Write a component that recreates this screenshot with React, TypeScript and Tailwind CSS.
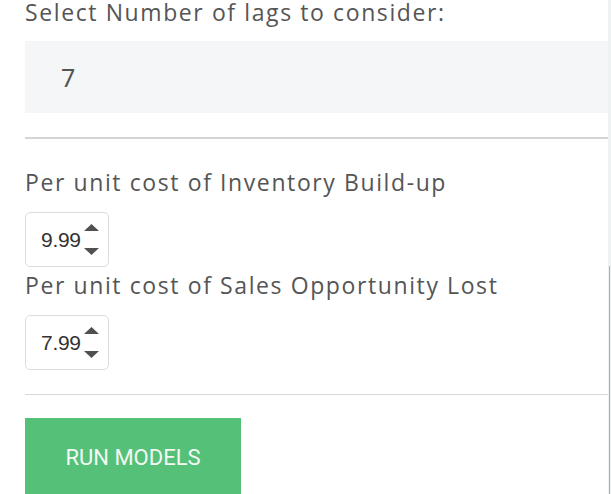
import React from "react";

function Arrows() {
  return (
    <div className="flex flex-col justify-between h-[31px] ml-[3px]">
      <svg width="15" height="7" viewBox="0 0 15 7">
        <polygon points="0,7 7.5,0 15,7" fill="#505050" />
      </svg>
      <svg width="15" height="7" viewBox="0 0 15 7">
        <polygon points="0,0 15,0 7.5,7" fill="#505050" />
      </svg>
    </div>
  );
}

function NumberBox({ value }: { value: string }) {
  return (
    <div className="w-[84px] h-[55px] border border-[#d9dddd] rounded-[5px] bg-white flex items-center pl-[15px]">
      <span className="text-[21px] leading-none text-[#333] tracking-[-0.3px] font-['Liberation_Sans',Arial,sans-serif]">
        {value}
      </span>
      <Arrows />
    </div>
  );
}

export default function App() {
  const label =
    "text-[23px] leading-[24px] h-[24px] text-[#555] tracking-[1.6px] font-['Open_Sans','Lato',sans-serif] whitespace-nowrap";
  return (
    <div className="w-[611px] h-[494px] overflow-hidden bg-white flex">
      <div className="w-[608px] pl-[25px] flex flex-col">
        <div className={label}>Select Number of lags to consider:</div>
        <div className="mt-[17px] h-[72px] bg-[#f5f6f7] flex items-center pl-[36px]">
          <span className="text-[25px] leading-none text-[#555] font-['Noto_Sans',sans-serif]">7</span>
        </div>
        <div className="mt-[24px] h-[2px] bg-[#d4d4d4]" />
        <div className={"mt-[31px] " + label}>Per unit cost of Inventory Build-up</div>
        <div className="mt-[18px]">
          <NumberBox value="9.99" />
        </div>
        <div className={"mt-[6px] " + label}>Per unit cost of Sales Opportunity Lost</div>
        <div className="mt-[18px]">
          <NumberBox value="7.99" />
        </div>
        <div className="mt-[24px] h-[1px] bg-[#d9d9d9]" />
        <div className="mt-[23px]">
          <button className="w-[216px] h-[76px] bg-[#55c178] text-[#f3f8f4] text-[22px] font-['Roboto',sans-serif] font-normal flex items-center justify-center pt-[3px]">
            RUN MODELS
          </button>
        </div>
      </div>
      <div className="w-[3px] bg-[#eef2f2] flex flex-col">
        <div className="h-[266px]" />
        <div className="flex-1 ml-[1px] border-l border-[#a9b1b1]" />
      </div>
    </div>
  );
}
